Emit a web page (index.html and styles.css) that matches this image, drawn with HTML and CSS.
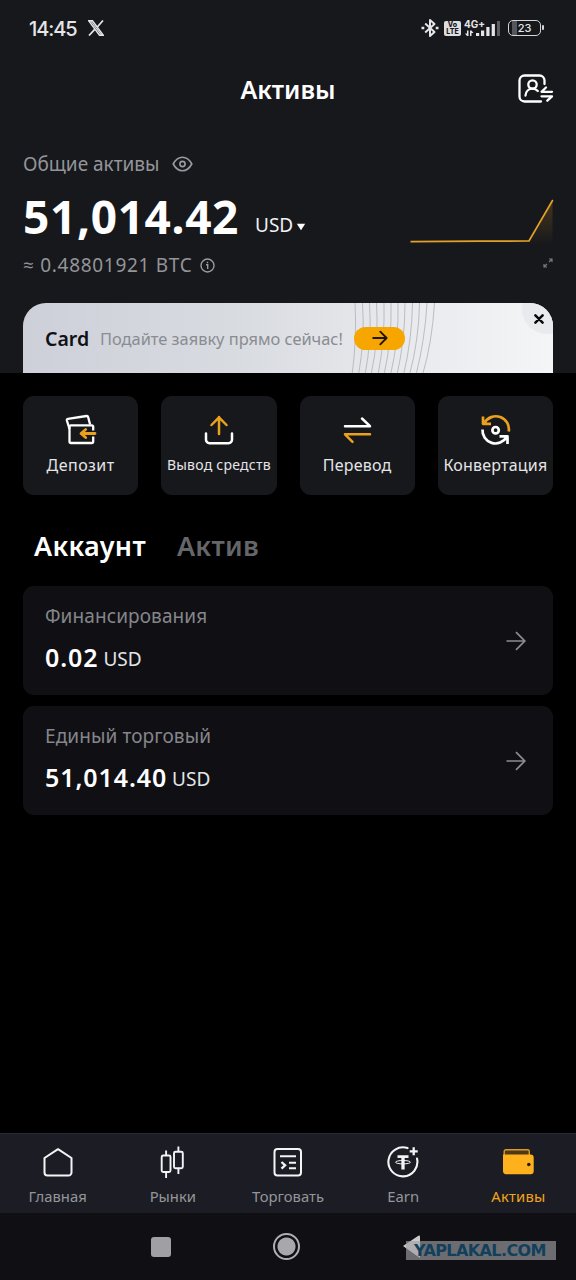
FILE: index.html
```html
<!DOCTYPE html>
<html lang="ru">
<head>
<meta charset="utf-8">
<title>Активы</title>
<link rel="stylesheet" href="styles.css">
</head>
<body>
<div class="screen">
  <header class="top">
    <div class="status">
      <span class="time">14:45</span>
      <svg class="x-logo" width="16" height="16" viewBox="0 0 16 16" fill="none" stroke="#e6e6e8"><path d="M.8.8h3.700l10.700 14.400h-3.700z" stroke-width="1.400"/><path d="M2.700 1l10.800 14.200" stroke-width="1.200"/><path d="M15 .5L9.300 7M6.700 9.300L1 15.500" stroke-width="1.700"/></svg>
      <div class="status-right">
        <svg width="18" height="20" viewBox="0 0 18 20" fill="none" stroke="#e6e6e8" stroke-width="2"><path d="M4.200 5.500L13.500 14 9 18V2l4.500 4L4.200 14.500" stroke-linejoin="round"/><path d="M.5 10h2.800M14.700 10h2.800" stroke-width="2.600"/></svg>
        <div class="volte"><span>Vo</span><span>LTE</span></div>
        <div class="network">
          <span class="net-label">4G+</span>
          <svg width="37" height="18" viewBox="0 0 37 18"><g fill="#e6e6e8"><path d="M3 11.500h1.500V17H3L1 14.500h2zM6 17v-5.500h1.500L9.500 14h-2v3z"/><rect x="12" y="14" width="3.200" height="3"/><rect x="17" y="11.500" width="3.200" height="5.500"/><rect x="22.300" y="8" width="3.200" height="9"/><rect x="27.700" y="5" width="3.200" height="12"/></g><rect x="33" y="2" width="3" height="15" fill="#5c5d61"/></svg>
        </div>
        <div class="battery"><span>23</span></div>
      </div>
    </div>
    <div class="titlebar">
      <h1>Активы</h1>
      <svg class="switch-user" width="36" height="30" viewBox="0 0 36 30" fill="none" stroke="#fff" stroke-width="2.300" stroke-linecap="round" stroke-linejoin="round"><path d="M26.500 10V6.500a5 5 0 0 0-5-5H6.500a5 5 0 0 0-5 5v16a5 5 0 0 0 5 5H23"/><circle cx="14.500" cy="10.500" r="4.200"/><path d="M7.500 21.500c.3-4 3.200-6.800 7-6.800 2.300 0 4 .9 5.300 2.300"/><path d="M34 17.800H23.500l4.500-4.300M23.500 22.300H34l-4.700 4.400" stroke-width="2.300"/></svg>
    </div>
    <section class="summary">
      <div class="total">
        <div class="total-label"><span class="fit-total">Общие активы</span>
          <svg width="21" height="16" viewBox="0 0 21 16" fill="none" stroke="#9a9ba0" stroke-width="1.600"><path d="M1.200 8C3.500 3.800 6.600 1.300 10.500 1.300S17.500 3.800 19.800 8c-2.300 4.200-5.400 6.700-9.300 6.700S3.500 12.200 1.200 8z" stroke-linejoin="round"/><circle cx="10.500" cy="8" r="2.600"/></svg>
        </div>
        <div class="total-value"><strong>51,014.42</strong><span class="currency">USD</span>
          <svg width="10" height="8" viewBox="0 0 10 8" fill="#fff"><path d="M.8.8h8.400L5 7.300z"/></svg>
        </div>
        <div class="btc"><span>≈ 0.48801921 BTC</span>
          <svg width="15" height="15" viewBox="0 0 15 15" fill="none" stroke="#9a9ba0" stroke-width="1.400"><circle cx="7.500" cy="7.500" r="6.500"/><path d="M6 6.700h1.700V11M7.500 3.700v1.500"/></svg>
        </div>
      </div>
      <div class="trend">
        <svg width="144" height="48" viewBox="0 0 144 48" fill="none"><defs><linearGradient id="fade" x1="0" y1="0" x2="0" y2="1"><stop offset="0" stop-color="#f2a51a" stop-opacity=".22"/><stop offset="1" stop-color="#f2a51a" stop-opacity="0"/></linearGradient></defs><path d="M1 45L119 44 142.500 3V48H1z" fill="url(#fade)"/><path d="M.5 44.700L70 44.200 119 44 142.800 3" stroke="#e3a12a" stroke-width="1.700"/></svg>
        <svg width="12" height="12" viewBox="0 0 12 12" fill="none" stroke="#77787d" stroke-width="1.200"><path d="M7 2h3v3M10 2L7 5M5 10H2V7M2 10l3-3"/></svg>
      </div>
    </section>
    <section class="promo">
      <svg class="promo-lines" width="100" height="72" viewBox="0 0 100 72" fill="none" stroke="#b5b7bc" stroke-width=".9"><path d="M8 0Q10 36 5 72M15.500 0Q18 36 11.500 72M22.500 0Q25 36 18 72M29.500 0Q32 36 24 72M37 0Q38 36 31 72M44 0Q45 36 37 72M51 0Q52 36 43.500 72M58 0Q58 36 50 72M65.500 0Q65 36 56.500 72M72.500 0Q72 36 62.500 72M80 0Q78 36 69 72M87.500 0Q85 40 75.500 72"/></svg>
      <strong>Card</strong>
      <span class="promo-text">Подайте заявку прямо сейчас!</span>
      <span class="promo-go"><svg width="16" height="16" viewBox="0 0 16 16" fill="none" stroke="#1d1506" stroke-width="1.900" stroke-linecap="round" stroke-linejoin="round"><path d="M1.200 8h13.300M8.300 1.700L14.600 8l-6.300 6.300"/></svg></span>
      <span class="promo-close"><svg width="10" height="10" viewBox="0 0 10 10" stroke="#0a0a0b" stroke-width="2.500" stroke-linecap="round"><path d="M1.400 1.400l7.200 7.200M8.600 1.400L1.400 8.600"/></svg></span>
    </section>
  </header>
  <main>
    <nav class="actions">
      <a class="action"><svg width="32" height="32" viewBox="0 0 32 32" fill="none" stroke="#fff" stroke-width="2.300" stroke-linejoin="round"><path d="M4.500 15L1.900 6.500q-.3-1.300 1-1.600L21.500 2q1.300-.2 1.600 1l2 7.500"/><rect x="4.500" y="11.300" width="23.700" height="17.700" rx="1.500"/><path d="M26.500 19.500h3.500" stroke="#17181c" stroke-width="6"/><path d="M30 19.500H16.500M20.700 15.500l-4.700 4 4.700 4" stroke="#e9a11e" stroke-width="2.800" stroke-linecap="round"/></svg><span class="t-deposit">Депозит</span></a>
      <a class="action"><svg width="32" height="32" viewBox="0 0 32 32" fill="none" stroke="#fff" stroke-width="2.500" stroke-linecap="round" stroke-linejoin="round"><path d="M3 19.500v6.300a3.400 3.400 0 0 0 3.400 3.400h19.200a3.400 3.400 0 0 0 3.400-3.400v-6.300"/><path d="M16 20V3M8.500 11L16 3.300l7.500 7.700" stroke="#e9a11e"/></svg><span class="t-withdraw">Вывод средств</span></a>
      <a class="action"><svg width="32" height="32" viewBox="0 0 32 32" fill="none" stroke="#fff" stroke-width="2.500" stroke-linecap="round" stroke-linejoin="round"><path d="M4 12.200h25L21 4.500"/><path d="M29 20.300H4l7.500 7.500" stroke="#e9a11e"/></svg><span class="t-transfer">Перевод</span></a>
      <a class="action"><svg width="32" height="32" viewBox="0 0 32 32" fill="none" stroke="#fff" stroke-width="2.700" stroke-linejoin="round"><path d="M4 2.500v7.300h8M5.500 9a13 13 0 0 1 24.200 8.500" stroke="#e9a11e"/><path d="M28.500 30v-7.600h-8M27.700 23A13 13 0 0 1 3.500 15.500"/><circle cx="16.600" cy="16.200" r="3.200"/></svg><span class="t-convert">Конвертация</span></a>
    </nav>
    <div class="tabs"><h2 class="tab-on">Аккаунт</h2><h2 class="tab-off">Актив</h2></div>
    <section class="account"><div><p class="t-funding">Финансирования</p><div class="sum"><strong>0.02</strong><span>USD</span></div></div>
      <svg width="20" height="20" viewBox="0 0 20 20" fill="none" stroke="#8b8c91" stroke-width="1.700"><path d="M.5 10h18M10 1.200l8.800 8.800-8.800 8.800"/></svg></section>
    <section class="account"><div><p class="t-unified">Единый торговый</p><div class="sum"><strong>51,014.40</strong><span>USD</span></div></div>
      <svg width="20" height="20" viewBox="0 0 20 20" fill="none" stroke="#8b8c91" stroke-width="1.700"><path d="M.5 10h18M10 1.200l8.800 8.800-8.800 8.800"/></svg></section>
  </main>
  <nav class="bottom">
    <a><svg width="32" height="34" viewBox="0 0 32 34" fill="none" stroke="#f4f4f6" stroke-width="2" stroke-linejoin="round"><path d="M16 4.200L29.500 13v14.500a3 3 0 0 1-3 3h-21a3 3 0 0 1-3-3V13z"/></svg><span class="n-home">Главная</span></a>
    <a><svg width="32" height="34" viewBox="0 0 32 34" fill="none" stroke="#f4f4f6" stroke-width="1.900"><rect x="4.700" y="10.500" width="8.800" height="16.500" rx="1.500"/><rect x="17" y="6.700" width="8.800" height="16.500" rx="1.500"/><path d="M9.100 5.500v5M9.100 27v6M21.400 1.500v5M21.400 23v6"/></svg><span class="n-markets">Рынки</span></a>
    <a><svg width="32" height="34" viewBox="0 0 32 34" fill="none" stroke="#f4f4f6" stroke-width="2"><rect x="2.500" y="4" width="26.500" height="26.500" rx="3"/><path d="M8 11.200h16M17 17.700h7M17 23.200h7"/><path d="M9.500 17l3.600 3.300-3.600 3.300" stroke-width="2.300"/></svg><span class="n-trade">Торговать</span></a>
    <a><svg width="32" height="34" viewBox="0 0 32 34" fill="none" stroke="#f4f4f6" stroke-width="2.100"><path d="M20.500 3.100A14.500 14.500 0 1 0 30 13.500" stroke-linecap="round"/><path d="M26.700 2.300v8M22.700 6.300h8" stroke-width="2.300"/><path d="M10.500 11.600h11" stroke-width="2.700"/><path d="M16 12v12.500" stroke-width="3.300"/><ellipse cx="16" cy="17.200" rx="7.500" ry="1.700" stroke-width="1"/></svg><span class="n-earn">Earn</span></a>
    <a class="current"><svg width="32" height="34" viewBox="0 0 32 34"><path d="M2.200 11V6.500A1.700 1.700 0 0 1 3.900 4.800h21.700a1.700 1.700 0 0 1 1.700 1.700V11" fill="#503715" stroke="#d99a2b" stroke-width="1.400"/><path d="M1 9.500h27.500a3.200 3.200 0 0 1 3.200 3.200V26a3.200 3.200 0 0 1-3.200 3.200H4A3.200 3.200 0 0 1 1 26z" fill="#ffb11d"/><circle cx="26.800" cy="19.500" r="1.800" fill="#1d1e26"/></svg><span class="n-assets">Активы</span></a>
  </nav>
  <footer class="system">
    <span class="recent"></span>
    <span class="home-key"></span>
    <svg class="back-key" width="20" height="26" viewBox="0 0 20 26"><path d="M1 12L16 2q2-1.200 2 1v21z" fill="#cacacc"/></svg>
    <span class="watermark">YAPLAKAL.COM</span>
  </footer>
</div>
</body>
</html>
```
FILE: styles.css
```css
* { box-sizing: border-box; margin: 0; padding: 0; }
body { background: #000; font-family: "Noto Sans", "Open Sans", sans-serif; color: #fff; }
svg { display: block; flex: none; }
span, strong, h1, h2, p { white-space: nowrap; }
.screen { width: 576px; height: 1280px; display: flex; flex-direction: column; overflow: hidden; }
.top { height: 373px; background: #17181c; flex: none; padding: 0 23px; }

.status { height: 56px; display: flex; align-items: center; padding: 0 9px 0 6px; }
.time { font: 500 20px/24px Inter, sans-serif; letter-spacing: -1.1px; color: #e6e6e8; width: 59px; padding-top: 2px; }
.status-right { margin-left: auto; display: flex; align-items: center; }
.volte { width: 17px; height: 15px; margin-left: 5px; border-radius: 2px; background: #dededf; color: #17181c; display: flex; flex-direction: column; align-items: center; font: 800 7px/7px Inter, sans-serif; }
.network { position: relative; width: 37px; margin-left: 3px; }
.net-label { position: absolute; left: 0; top: 0; font: 700 10px/10px Inter, sans-serif; color: #e6e6e8; }
.battery { position: relative; width: 33px; height: 16px; margin: 0 3px 0 7px; border: 1.500px solid #d5d5d7; border-radius: 5px; display: flex; align-items: center; justify-content: center; background: linear-gradient(90deg, transparent 3px, #56575b 3px, #56575b 8px, transparent 8px); }
.battery::after { content: ""; position: absolute; right: -4px; top: 4px; width: 2px; height: 5px; border-radius: 1px; background: #d5d5d7; }
.battery span { font: 500 11px/12px Inter, sans-serif; color: #e6e6e8; }

.titlebar { height: 66px; display: grid; grid-template-columns: 36px 1fr 36px; align-items: center; }
.titlebar h1 { grid-column: 2; text-align: center; font-size: 25px; font-weight: 600; line-height: 34px; }
.switch-user { margin-left: 1px; }

.summary { height: 181px; padding-top: 27px; display: flex; justify-content: space-between; }
.total-label { height: 30px; display: flex; align-items: center; gap: 13px; color: #94959a; font-size: 19px; }
.fit-total { width: 136px; }
.total-value { height: 76px; display: flex; align-items: baseline; padding-top: 5px; }
.total-value strong { width: 232px; font-size: 46px; line-height: 64px; font-weight: 700; letter-spacing: .65px; }
.currency { width: 41px; font-size: 19px; color: #f0f0f2; position: relative; top: -2px; }
.total-value svg { position: relative; top: -3px; }
.btc { height: 30px; margin-top: -5px; display: flex; align-items: center; gap: 9px; color: #94959a; font-size: 19px; letter-spacing: .7px; }
.btc span { width: 168px; }
.trend { display: flex; flex-direction: column; align-items: flex-end; gap: 12px; padding-top: 48px; margin-right: -1px; }

.promo { position: relative; height: 70px; border-radius: 23px 23px 0 0; overflow: hidden; background: linear-gradient(90deg, #cdd0d9, #d8dbe0 40%, #eaebee 75%, #f4f5f7); display: flex; align-items: center; padding-left: 22px; color: #101114; }
.promo strong { width: 55px; font-size: 19.500px; font-weight: 600; position: relative; }
.promo-lines { position: absolute; left: 324px; top: 0; }
.promo-text { position: relative; width: 254px; font-size: 16.400px; color: #8a8c91; }
.promo-go { position: relative; width: 51px; height: 23px; border-radius: 12px; background: #f7a600; display: flex; align-items: center; justify-content: center; }
.promo-close { position: absolute; right: -19px; top: -19px; width: 50px; height: 50px; border-radius: 50%; background: #e9eaed; display: flex; align-items: center; justify-content: center; padding: 20px 16px 0 0; }

main { flex: 1; padding: 23px 23px 0; }
.actions { display: grid; grid-template-columns: repeat(4, 1fr); gap: 23px; }
.action { height: 99px; border-radius: 11px; background: #17181c; display: flex; flex-direction: column; align-items: center; padding-top: 18px; gap: 7px; color: #e5e5e8; line-height: 24px; }
.t-deposit { font-size: 16px; letter-spacing: .45px; }
.t-transfer, .t-convert { font-size: 16px; letter-spacing: .2px; }
.t-withdraw { font-size: 14px; letter-spacing: .25px; }
.tabs { display: flex; gap: 31px; padding-left: 11px; height: 91px; align-items: center; padding-top: 11px; }
.tabs h2 { font-size: 27px; line-height: 38px; font-weight: 600; letter-spacing: .3px; }
.tab-off { color: #65666a; }
.account { height: 109px; border-radius: 11px; background: #101014; display: flex; align-items: center; justify-content: space-between; padding: 0 27px 0 22px; margin-bottom: 11px; }
.account > div { padding-bottom: 2px; }
.account p { font-size: 19px; line-height: 28px; letter-spacing: .1px; color: #85868b; }
.sum { display: flex; align-items: baseline; gap: 5px; margin-top: 10px; line-height: 34px; }
.sum strong { font-size: 25px; font-weight: 600; letter-spacing: .9px; }
.sum span { font-size: 19px; color: #e5e5e8; position: relative; top: -1px; }

.bottom { height: 80px; background: #1c1d24; border-top: 1px solid #282a32; display: grid; grid-template-columns: repeat(5, 1fr); flex: none; }
.bottom a { display: flex; flex-direction: column; align-items: center; padding-top: 11px; color: #94959a; font-size: 14.800px; line-height: 20px; gap: 7px; }
.bottom .current { color: #f0a31b; }
.bottom .n-assets { letter-spacing: .2px; }
.system { position: relative; height: 67px; flex: none; background: #101014; display: flex; align-items: center; padding-left: 151px; }
.recent { width: 20px; height: 20px; border-radius: 3px; background: #a0a0a4; }
.home-key { width: 27px; height: 27px; margin-left: 102px; border-radius: 50%; border: 2px solid #b0b0b4; background: radial-gradient(circle, #a8a8ac 8.500px, transparent 9.500px); }
.back-key { margin-left: 102px; }
.watermark { position: absolute; left: 406px; top: 28px; width: 150px; height: 19px; padding-left: 8px; background: rgba(160, 160, 163, .65); color: #123f5c; font: 700 16px/19px "DejaVu Sans", sans-serif; letter-spacing: -.6px; }
```
